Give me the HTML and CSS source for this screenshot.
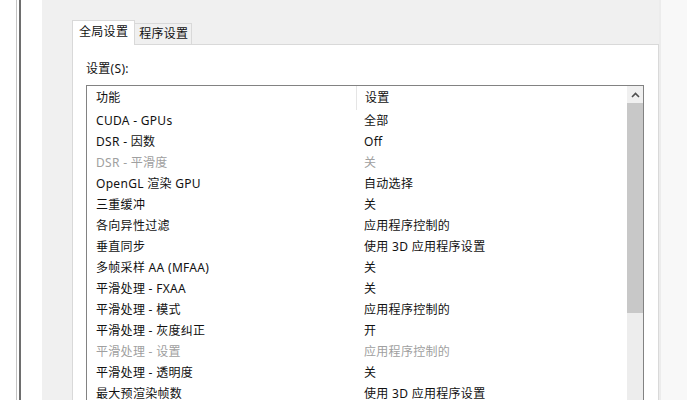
FILE: index.html
```html
<html>
<head>
    <link rel="stylesheet" href="styles.css">
</head>
<body>
    <div class="edge"></div>
    <div class="rule"></div>
    <div class="gutter"></div>

    <section class="main">
        <div class="tabs">
            <div class="tab active">全局设置</div>
            <div class="tab">程序设置</div>
        </div>
        <div class="panel">
            <div class="label">设置(S):</div>
            <div class="listbox">
                <div class="table">
                    <div class="row head">
                        <div class="col1">功能</div>
                        <div class="col2">设置</div>
                    </div>
                    <div class="row"><div class="col1">CUDA - GPUs</div><div class="col2">全部</div></div>
                    <div class="row"><div class="col1">DSR - 因数</div><div class="col2">Off</div></div>
                    <div class="row off"><div class="col1">DSR - 平滑度</div><div class="col2">关</div></div>
                    <div class="row"><div class="col1">OpenGL 渲染 GPU</div><div class="col2">自动选择</div></div>
                    <div class="row"><div class="col1">三重缓冲</div><div class="col2">关</div></div>
                    <div class="row"><div class="col1">各向异性过滤</div><div class="col2">应用程序控制的</div></div>
                    <div class="row"><div class="col1">垂直同步</div><div class="col2">使用 3D 应用程序设置</div></div>
                    <div class="row"><div class="col1">多帧采样 AA (MFAA)</div><div class="col2">关</div></div>
                    <div class="row"><div class="col1">平滑处理 - FXAA</div><div class="col2">关</div></div>
                    <div class="row"><div class="col1">平滑处理 - 模式</div><div class="col2">应用程序控制的</div></div>
                    <div class="row"><div class="col1">平滑处理 - 灰度纠正</div><div class="col2">开</div></div>
                    <div class="row off"><div class="col1">平滑处理 - 设置</div><div class="col2">应用程序控制的</div></div>
                    <div class="row"><div class="col1">平滑处理 - 透明度</div><div class="col2">关</div></div>
                    <div class="row"><div class="col1">最大预渲染帧数</div><div class="col2">使用 3D 应用程序设置</div></div>
                </div>
                <div class="scrollbar">
                    <div class="arrow">
                        <svg width="9" height="6" viewBox="0 0 9 6"><polyline points="1,5 4.5,1.5 8,5" fill="none" stroke="#505050" stroke-width="1.6"/></svg>
                    </div>
                    <div class="thumb"></div>
                    <div class="track"></div>
                </div>
            </div>
        </div>
    </section>

    <div class="side"></div>
</body>
</html>
```

FILE: styles.css
```css
body {
    margin: 0;
    display: flex;
    height: 400px;
    overflow: hidden;
    font-family: "Noto Sans", "Noto Sans CJK SC", sans-serif;
    font-size: 12px;
    letter-spacing: 0.3px;
    color: #111;
    background: #fff;
}
.edge {width: 16px; border-right: 1px solid #c4c4c4;}
.rule {width: 2px; margin-left: 2px; background: #6e6e6e;}
.gutter {width: 21px; background: #fff;}

.main {
    width: 587px;
    background: #f0f0f0;
    padding: 20px 0 0 30px;
    display: flex;
    flex-direction: column;
}
.tabs {display: flex; align-items: flex-end; height: 24px;}
.tab {
    height: 20px;
    line-height: 20px;
    padding: 0 3px 0 4px;
    background: #f0f0f0;
    border: 1px solid #d9d9d9;
    border-bottom: none;
    border-left: none;
}
.tab.active {
    height: 24px;
    line-height: 22px;
    padding: 0 6px;
    background: #fff;
    border-left: 1px solid #d9d9d9;
    position: relative;
    top: 1px;
}
.panel {
    flex: 1;
    background: #fff;
    border: 1px solid #d9d9d9;
    border-bottom: none;
    padding: 11px 14px 0 13px;
}
.label {height: 29px; line-height: 26px;}

.listbox {
    display: flex;
    border: 1px solid #828282;
    border-bottom: none;
    height: 320px;
}
.table {flex: 1;}
.row {display: flex; height: 21px; line-height: 21px; white-space: nowrap;}
.row.head {height: 24px; line-height: 24px;}
.row.off {color: #a0a0a0;}
.col1 {width: 260px; padding-left: 9px;}
.col2 {padding-left: 8px;}
.head .col2 {border-left: 1px solid #e5e5e5;}

.scrollbar {
    width: 16px;
    display: flex;
    flex-direction: column;
    background: #ededed;
}
.arrow {
    height: 17px;
    display: flex;
    align-items: center;
    justify-content: center;
    background: #f0f0f0;
}
.thumb {height: 210px; background: #c8c8c8;}
.track {flex: 1;}

.side {
    flex: 1;
    background: #f8f8f8;
    border-left: 2px solid #ececec;
}
```
